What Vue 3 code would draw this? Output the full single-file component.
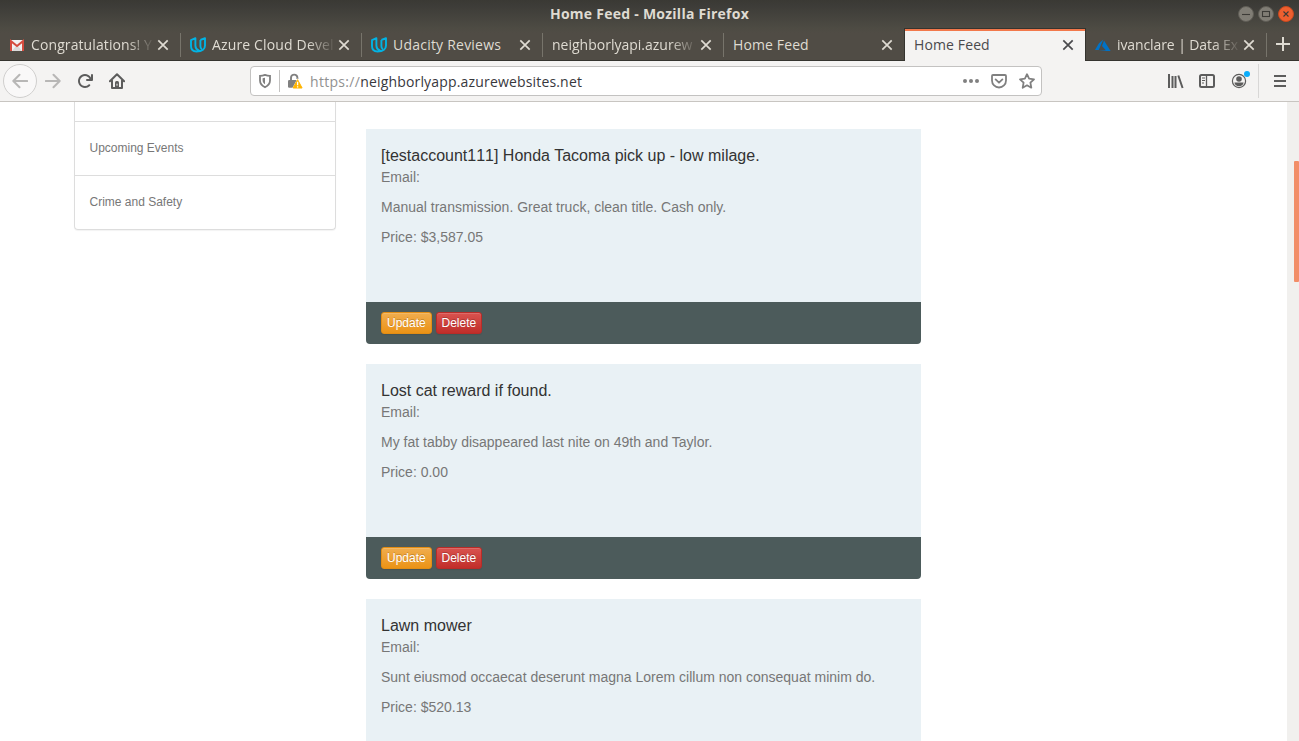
<script setup>
const tabs = [
  { title: 'Congratulations! Y', icon: 'gmail', fit: 'a', long: true },
  { title: 'Azure Cloud Devel', icon: 'udacity', fit: 'b', long: true },
  { title: 'Udacity Reviews', icon: 'udacity', fit: 'c' },
  { title: 'neighborlyapi.azurew', fit: 'd', long: true },
  { title: 'Home Feed', fit: 'e' },
  { title: 'Home Feed', fit: 'e', active: true },
  { title: 'ivanclare | Data Ex', icon: 'azure', fit: 'f', long: true },
]

const posts = [
  {
    account: '[testaccount111]',
    title: ' Honda Tacoma pick up - low milage.',
    text: 'Manual transmission. Great truck, clean title. Cash only.',
    price: '$3,587.05',
    editable: true,
  },
  {
    title: 'Lost cat reward if found.',
    text: 'My fat tabby disappeared last nite on 49th and Taylor.',
    price: '0.00',
    editable: true,
  },
  {
    title: 'Lawn mower',
    text: 'Sunt eiusmod occaecat deserunt magna Lorem cillum non consequat minim do.',
    price: '$520.13',
  },
]
</script>

<template>
  <div class="window">
    <header class="titlebar">
      <span class="window-title">Home Feed - Mozilla Firefox</span>
      <div class="controls">
        <svg viewBox="0 0 16 16"><circle cx="8" cy="8" r="7.5" class="ctl" /><path d="M4 8.5h8" class="mark" /></svg>
        <svg viewBox="0 0 16 16"><circle cx="8" cy="8" r="7.5" class="ctl" /><rect x="4.5" y="5.5" width="7" height="5" class="mark" /></svg>
        <svg viewBox="0 0 16 16"><circle cx="8" cy="8" r="7.5" class="ctl close-ctl" /><path d="M5.5 5.5l5 5m0-5l-5 5" class="mark" /></svg>
      </div>
    </header>

    <nav class="tabs">
      <div v-for="(tab, i) in tabs" :key="i" class="tab" :class="{ active: tab.active, 'before-active': tabs[i + 1]?.active }">
        <svg v-if="tab.icon === 'gmail'" class="favicon" viewBox="0 0 16 16">
          <path d="M2 3h12v11H2z" fill="#f2f2f2" />
          <path d="M3 14l4-5h2l4 5z" fill="#dadada" />
          <path d="M2 14V4.200L8 9l6-4.800V14" fill="none" stroke="#d54c3f" stroke-width="2" />
        </svg>
        <svg v-else-if="tab.icon === 'udacity'" class="favicon" viewBox="0 0 16 16">
          <path d="M5.400 1.200L1 3.200V9c0 3.200 2 5.300 5.500 5.500l2.300-1.100C6.600 12.600 5.400 11.200 5.400 8.800zM10.400 3L15 1.200v7.300c0 3.500-2.600 6-8.500 6M10.400 3v6.200c0 1.400.4 2.300 1.400 3" fill="none" stroke="#02b3e4" stroke-width="1.900" stroke-linejoin="round" />
        </svg>
        <svg v-else-if="tab.icon === 'azure'" class="favicon" viewBox="0 0 16 16">
          <path d="M8.300 2.500L4 6.200 0 13h3.700zM9 3.400L7 9l3.900 4.300L3.500 14H15.600z" fill="#0072c6" />
        </svg>
        <span class="tab-title" :class="{ fade: tab.long }"><span :class="'fit-' + tab.fit">{{ tab.title }}</span></span>
        <svg class="tab-close" viewBox="0 0 12 12"><path d="M1.300 1.300l9.400 9.400m0-9.400l-9.400 9.400" /></svg>
      </div>
      <svg class="new-tab" viewBox="0 0 14 14"><path d="M7 0v14M0 7h14" /></svg>
    </nav>

    <div class="toolbar">
      <div class="nav-buttons">
        <span class="back">
          <svg class="icon dim" viewBox="0 0 16 16"><path d="M15.200 8H1.500M7.500 1.700L1.300 8l6.200 6.300" /></svg>
        </span>
        <svg class="icon faint" viewBox="0 0 16 16"><path d="M.8 8h13.700M8.500 1.700L14.700 8l-6.200 6.300" /></svg>
        <svg class="icon solid" viewBox="0 0 16 16">
          <path d="M15 1a1 1 0 0 0-1 1v2.418A6.995 6.995 0 1 0 8 15a6.954 6.954 0 0 0 4.950-2.050 1 1 0 0 0-1.414-1.414A5.019 5.019 0 1 1 12.549 6H10a1 1 0 0 0 0 2h5a1 1 0 0 0 1-1V2a1 1 0 0 0-1-1z" />
        </svg>
        <svg class="icon" viewBox="0 0 16 16">
          <path d="M.9 8.300L8 1.200l7.100 7.100M3 7.500V15h10V7.500" stroke-linejoin="round" stroke-linecap="round" />
          <path d="M6 15V9.500A1.500 1.500 0 0 1 7.500 8h1A1.500 1.500 0 0 1 10 9.500V15z" fill="#5c5c5c" stroke="none" />
          <path d="M8 10.700v2" stroke="#f4f3f2" stroke-width="1" />
        </svg>
      </div>

      <div class="urlbar">
        <svg class="shield" viewBox="0 0 16 16">
          <path d="M8 1.900c2 .8 3.500 1 5 1v4.600c0 3.200-1.800 5.200-5 6.700-3.200-1.500-5-3.500-5-6.700V2.900c1.500 0 3-.2 5-1z" />
          <path d="M8 4.800v6.500C6.400 10.200 5.600 9 5.600 7.300V5.200c.8 0 1.600-.1 2.400-.4z" class="shield-fill" />
        </svg>
        <span class="url-sep"></span>
        <svg class="lock" viewBox="0 0 16 16">
          <path d="M4 7.500V4.800a3.200 3.200 0 0 1 6.400 0V6" fill="none" stroke="#808080" stroke-width="1.900" />
          <rect x="1" y="7" width="9.500" height="7.800" rx="1.200" fill="#808080" />
          <path d="M10.600 5.200L4.900 16h11.400z" fill="#fff" />
          <path d="M10.600 6.700l4.500 8.300H6.100z" fill="#ffb400" stroke="#ffb400" stroke-width="1" stroke-linejoin="round" />
          <path d="M10.600 8.700v3.500m0 1v1.400" stroke="#fff" stroke-width="1.300" />
        </svg>
        <span class="url"><i>https://</i>neighborlyapp.azurewebsites.net</span>
        <svg class="dots" viewBox="0 0 16 16"><circle cx="2" cy="8" r="2" /><circle cx="8" cy="8" r="2" /><circle cx="14" cy="8" r="2" /></svg>
        <svg class="url-icon" viewBox="0 0 16 16">
          <path d="M2 2h12a1 1 0 0 1 1 1v4.500a7 7 0 0 1-14 0V3a1 1 0 0 1 1-1z" />
          <path d="M4.600 6.400L8 9.700l3.400-3.300" stroke-linecap="round" stroke-linejoin="round" />
        </svg>
        <svg class="url-icon" viewBox="0 0 16 16">
          <path d="M8 1.200l2.100 4.500 4.900.6-3.600 3.400.9 5L8 12.300l-4.300 2.400.9-5L1 6.300l4.900-.6z" stroke-linejoin="round" />
        </svg>
      </div>

      <div class="actions">
        <svg class="icon library" viewBox="0 0 16 16"><path d="M1 1v14M4.500 3v12M7.500 3v12M10.300 2.500L14.600 15" stroke-width="2" /></svg>
        <svg class="icon" viewBox="0 0 16 16">
          <rect x="1" y="2" width="14" height="12" rx="1.500" />
          <path d="M7.500 2v12" stroke-width="1.300" /><path d="M3 5h3M3 7.500h3M3 10h2" stroke-width="1" />
        </svg>
        <span class="account">
          <svg class="icon" viewBox="0 0 16 16">
            <circle cx="8" cy="8" r="6.600" stroke-width="1.200" />
            <circle cx="8" cy="6" r="2.800" fill="#5c5c5c" stroke="none" />
            <path d="M3.400 9.500h9.200c-.3 2.500-2.200 3.800-4.600 3.800S3.700 12 3.400 9.500z" fill="#5c5c5c" stroke="none" />
          </svg>
          <span class="notice"></span>
        </span>
        <span class="menu">
          <svg class="icon" viewBox="0 0 16 16"><path d="M2 3h12M2 8h12M2 13h12" /></svg>
        </span>
      </div>
    </div>

    <main class="page">
      <div class="content">
        <aside class="panel">
          <div class="row cut"></div>
          <div class="row">Upcoming Events</div>
          <div class="row">Crime and Safety</div>
        </aside>
        <section class="feed">
          <article v-for="post in posts" :key="post.title" class="card">
            <div class="card-body">
              <h4><span v-if="post.account" class="account-name">{{ post.account }}</span>{{ post.title }}</h4>
              <p>Email:</p>
              <p>{{ post.text }}</p>
              <p>Price: {{ post.price }}</p>
            </div>
            <footer v-if="post.editable">
              <button class="update">Update</button>
              <button class="delete">Delete</button>
            </footer>
          </article>
        </section>
      </div>
      <div class="scrollbar"><div class="thumb"></div></div>
    </main>
  </div>
</template>

<style>
body {
  margin: 0;
  overflow: hidden;
}
</style>

<style scoped>
* {
  box-sizing: border-box;
}
.window {
  width: 1299px;
  height: 741px;
  display: flex;
  flex-direction: column;
  overflow: hidden;
  background: #fff;
  font-family: "Open Sans", "Noto Sans", sans-serif;
}
svg {
  display: block;
  flex: none;
}
.titlebar {
  height: 28px;
  flex: none;
  display: grid;
  grid-template-columns: 1fr auto 1fr;
  align-items: center;
  background: linear-gradient(#3a3934, #3c3b37 15%, #4d4b43);
}
.window-title {
  grid-column: 2;
  color: #dfdbd2;
  font-size: 14px;
  font-weight: 700;
  line-height: 28px;
  white-space: nowrap;
  letter-spacing: 0.25px;
}
.controls {
  display: flex;
  gap: 4px;
  justify-content: flex-end;
  padding-right: 5px;
}
.controls svg {
  width: 16px;
  height: 16px;
}
.ctl {
  fill: #807d75;
  stroke: #5f5d56;
}
.close-ctl {
  fill: #ee5f2f;
  stroke: #c9491f;
}
.mark {
  fill: none;
  stroke: #3c3b37;
  stroke-width: 1.1;
}
.tabs {
  height: 33px;
  flex: none;
  display: flex;
  background: linear-gradient(#4d4b43, #504c45 15%);
  color: #dfdbd2;
  border-bottom: 1px solid #35342f;
}
.tab {
  position: relative;
  width: 181px;
  height: 32px;
  flex: none;
  display: flex;
  align-items: center;
  padding: 1px 12px 0 9px;
}
.tab::after {
  content: "";
  position: absolute;
  right: 0;
  top: 5px;
  bottom: 3px;
  width: 1px;
  background: #77746b;
}
.tab.before-active::after,
.tab.active::after {
  top: 0;
  bottom: 0;
  background: #35342f;
}
.tab.active {
  height: 33px;
  padding-bottom: 1px;
  background: linear-gradient(#35342f 1px, #f2784b 1px, #f2784b 3px, #f4f3f2 3px);
  color: #4a4a4d;
}
.favicon {
  width: 16px;
  height: 16px;
  margin-right: 6px;
}
.tab-title {
  flex: 1;
  min-width: 0;
  white-space: nowrap;
  font-size: 14px;
  line-height: 24px;
}
.tab-title.fade {
  mask-image: linear-gradient(to right, #000 calc(100% - 30px), transparent calc(100% - 2px));
}
.fit-a { letter-spacing: 0.1px; }
.fit-b { letter-spacing: 0.15px; }
.fit-c { letter-spacing: 0.22px; }
.fit-d { letter-spacing: 0; }
.fit-e { letter-spacing: 0.12px; }
.fit-f { letter-spacing: -0.1px; }
.tab-close {
  width: 12px;
  height: 12px;
}
.tab-close path {
  stroke: currentColor;
  stroke-width: 1.7;
}
.new-tab {
  width: 14px;
  height: 14px;
  margin: 9px 0 0 9px;
}
.new-tab path {
  stroke: #dfdbd2;
  stroke-width: 2;
}
.toolbar {
  height: 41px;
  flex: none;
  display: flex;
  align-items: center;
  background: #f4f3f2;
  border-bottom: 1px solid #c8c5c1;
}
.nav-buttons {
  width: 250px;
  display: flex;
  align-items: center;
  gap: 16px;
  padding-left: 3px;
}
.back {
  width: 34px;
  height: 34px;
  margin-right: -8px;
  border: 1px solid #d0cfce;
  border-radius: 50%;
  background: #f9f8f8;
  display: flex;
  align-items: center;
  justify-content: center;
}
.icon {
  width: 16px;
  height: 16px;
  fill: none;
  stroke: #5c5c5c;
  stroke-width: 2;
}
.icon.dim,
.icon.faint {
  stroke: #b8b7b6;
  stroke-linecap: round;
  stroke-linejoin: round;
}
.icon.solid {
  fill: #5c5c5c;
  stroke: none;
}
.icon.library {
  margin-right: -1px;
}
.urlbar {
  width: 792px;
  height: 30px;
  display: flex;
  align-items: center;
  padding: 0 6px 0 6px;
  background: #fff;
  border: 1px solid #c3c2c1;
  border-radius: 4px;
}
.shield {
  width: 16px;
  height: 16px;
  fill: none;
  stroke: #808080;
  stroke-width: 1.8;
}
.shield .shield-fill {
  fill: #808080;
  stroke: none;
}
.url-sep {
  width: 1px;
  height: 22px;
  margin: 0 7px 0 6px;
  background: #c3c2c1;
}
.lock {
  width: 16px;
  height: 16px;
}
.url {
  flex: 1;
  margin-left: 7px;
  padding-top: 1px;
  font-size: 14px;
  line-height: 28px;
  letter-spacing: 0.17px;
  color: #38383d;
  white-space: nowrap;
}
.url i {
  font-style: normal;
  color: #919191;
  letter-spacing: 0.3px;
}
.dots {
  width: 16px;
  height: 16px;
  fill: #808080;
}
.url-icon {
  width: 16px;
  height: 16px;
  margin-left: 12px;
  fill: none;
  stroke: #808080;
  stroke-width: 1.8;
}
.actions {
  flex: 1;
  display: flex;
  align-items: center;
  justify-content: flex-end;
  gap: 16px;
  padding-right: 11px;
}
.account {
  position: relative;
}
.notice {
  position: absolute;
  left: 13px;
  top: -2px;
  width: 6px;
  height: 6px;
  border-radius: 50%;
  background: #0aadfb;
}
.menu {
  height: 34px;
  margin-left: -5px;
  padding-left: 13px;
  border-left: 1px solid #d8d7d6;
  display: flex;
  align-items: center;
}
.page {
  flex: 1;
  min-height: 0;
  display: flex;
  font-family: "Liberation Sans", Arial, sans-serif;
}
.content {
  flex: 1;
  display: flex;
  align-items: flex-start;
  gap: 30px;
  padding-left: 74px;
}
.panel {
  width: 262px;
  border: 1px solid #ddd;
  border-top: 0;
  border-radius: 0 0 4px 4px;
  box-shadow: 0 1px 1px rgba(0, 0, 0, 0.05);
}
.row {
  height: 54px;
  padding-left: 14.5px;
  border-top: 1px solid #ddd;
  color: #777;
  font-size: 12px;
  line-height: 53px;
}
.row.cut {
  height: 19px;
  border-top: 0;
}
.feed {
  width: 555px;
  padding-top: 27px;
}
.card {
  margin-bottom: 20px;
  border-radius: 0 0 4px 4px;
  overflow: hidden;
}
.card-body {
  height: 173px;
  padding: 15px;
  background: #e9f1f5;
}
h4 {
  margin: 0;
  color: #333;
  font-size: 16px;
  font-weight: 400;
  line-height: 23px;
}
.account-name {
  font-kerning: none;
}
p {
  margin: 0 0 10px;
  color: #777;
  font-size: 14px;
  line-height: 20px;
}
footer {
  height: 42px;
  display: flex;
  align-items: flex-start;
  gap: 4px;
  padding: 10px 15px;
  background: #4c5b5b;
}
button {
  height: 22px;
  padding: 0 5px;
  border: 1px solid;
  border-radius: 3px;
  color: #fff;
  font: 12px/18px "Liberation Sans", Arial, sans-serif;
  text-align: left;
  text-shadow: 0 -1px 0 rgba(0, 0, 0, 0.2);
  box-shadow: inset 0 1px 0 rgba(255, 255, 255, 0.15), 0 1px 1px rgba(0, 0, 0, 0.075);
}
.update {
  width: 51px;
  border-color: #e38d13;
  background: linear-gradient(#f0ad4e, #eb9316);
}
.delete {
  width: 46px;
  padding-left: 4.5px;
  border-color: #b92c28;
  background: linear-gradient(#d9534f, #c12e2a);
}
.scrollbar {
  width: 12px;
  padding-top: 59px;
  background: #f1f0ee;
}
.thumb {
  width: 5px;
  height: 121px;
  margin-left: 7px;
  border-radius: 1px;
  background: #f28e68;
}
</style>
